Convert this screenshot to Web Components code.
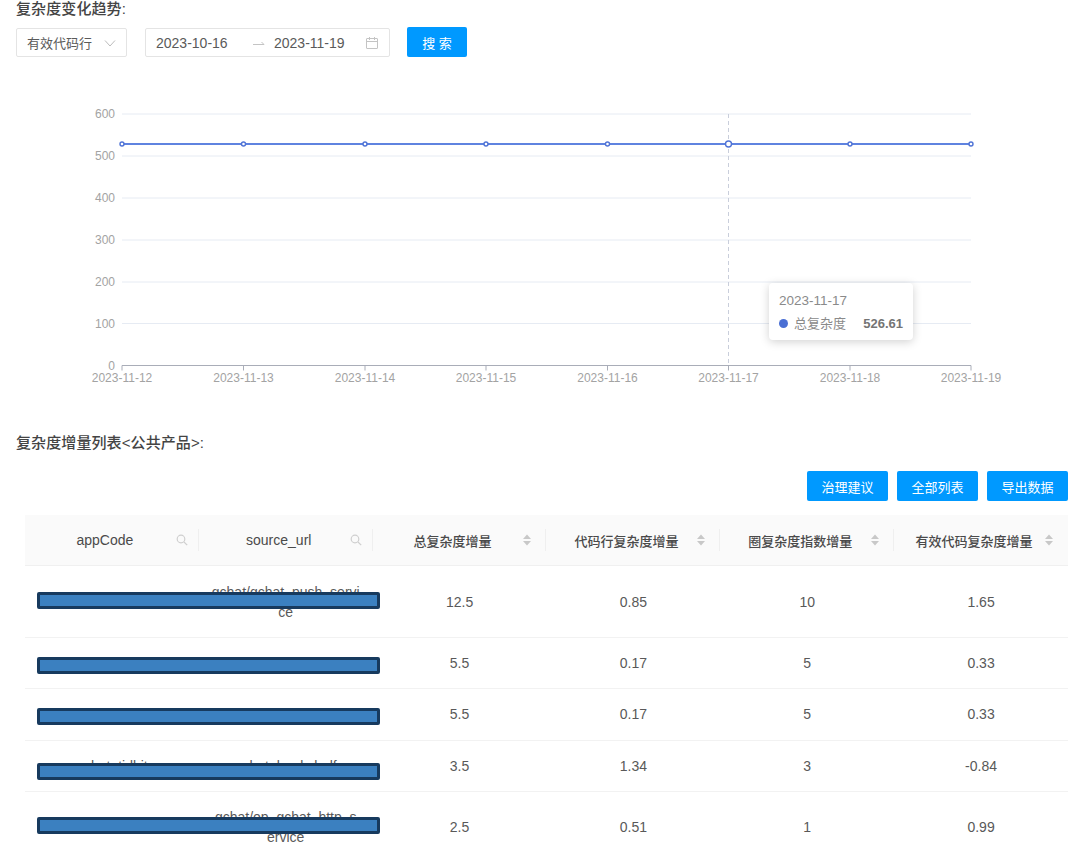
<!DOCTYPE html>
<html lang="zh">
<head>
<meta charset="utf-8">
<title>复杂度</title>
<style>
  html, body { margin: 0; background: #fff; }
  body { height: 847px; overflow: hidden; font: 14px "Liberation Sans", "Noto Sans CJK SC", sans-serif; color: #555; }
</style>
</head>
<body>
<cx-title>复杂度变化趋势:</cx-title>
<cx-filter></cx-filter>
<cx-chart></cx-chart>
<cx-title style="margin-top:44px">复杂度增量列表&lt;公共产品&gt;:</cx-title>
<cx-actions>
  <cx-button>治理建议</cx-button>
  <cx-button>全部列表</cx-button>
  <cx-button>导出数据</cx-button>
</cx-actions>
<cx-table>
  <cx-head></cx-head>
  <cx-row h="72" bar="26" url="gchat/gchat_push_service" vals="12.5,0.85,10,1.65"></cx-row>
  <cx-row h="51.33" bar="19" vals="5.5,0.17,5,0.33"></cx-row>
  <cx-row h="51.33" bar="19" vals="5.5,0.17,5,0.33"></cx-row>
  <cx-row h="51.33" bar="22" app="gchat_tidbit" url="gchat_bookshelf" vals="3.5,1.34,3,-0.84"></cx-row>
  <cx-row h="72" bar="25" url="gchat/op_gchat_http_service" vals="2.5,0.51,1,0.99"></cx-row>
</cx-table>

<script>
  const define = (tag, css, html) => {
    customElements.define(tag, class extends HTMLElement {
      constructor() {
        super();
        this.attachShadow({ mode: "open" });
        const body = typeof html === "function" ? html(this) : html;
        this.shadowRoot.innerHTML = `<style>${css}</style>${body}`;
      }
    });
  };

  define("cx-title", `
    :host { display: block; padding-left: 16px; height: 17px; line-height: 17px; font-size: 15px; font-weight: 500; letter-spacing: .1px; color: #444; }
  `, `<slot></slot>`);

  const chevron = `<svg width="12" height="12" viewBox="0 0 12 12" fill="none" stroke="#bcbcbc"><path d="M1 3.5l5 5.5 5-5.5"/></svg>`;
  const swap = `<svg width="12" height="8" viewBox="0 0 12 8" fill="none" stroke="#c4c4c4"><path d="M0 5.5h11L8.5 3"/></svg>`;
  const calendar = `<svg width="14" height="14" viewBox="0 0 14 14" fill="none" stroke="#c4c4c4"><rect x="1.5" y="2.5" width="11" height="10" rx=".5"/><path d="M1.5 5.5h11M4.5 1v3M9.5 1v3"/></svg>`;

  define("cx-filter", `
    :host { display: flex; align-items: flex-start; margin-top: 10px; padding-left: 16px; height: 30px; color: #5a5a5a; }
    .box { box-sizing: border-box; height: 29px; margin-top: 1px; border: 1px solid #e4e4e4; border-radius: 2px; display: flex; align-items: center; background: #fff; }
    .select { width: 111px; padding: 0 10px; justify-content: space-between; margin-right: 18px; font-size: 13px; }
    .range { width: 245px; padding: 0 10px; }
    .date { width: 97px; }
    .arrow { width: 21px; display: flex; }
    .range > svg { margin-left: auto; }
    .go { margin-left: 17px; width: 60px; height: 30px; background: #0099ff; color: #fff; border-radius: 2px; font-size: 13px; display: flex; align-items: center; justify-content: center; }
  `, `
    <div class="box select"><span>有效代码行</span>${chevron}</div>
    <div class="box range"><span class="date">2023-10-16</span><span class="arrow">${swap}</span><span>2023-11-19</span>${calendar}</div>
    <div class="go">搜 索</div>
  `);

  define("cx-chart", `
    :host { display: block; position: relative; width: 1080px; height: 300px; margin-top: 33px; }
    svg { display: block; }
    text { font: 12px "Liberation Sans", sans-serif; fill: #a3a3a3; }
    .tip { position: absolute; left: 769px; top: 193px; width: 144px; height: 57px; box-sizing: border-box; padding: 9px 10px; background: #fff; border-radius: 4px; box-shadow: 0 2px 10px rgba(0,0,0,.18); color: #8a8a8a; font-size: 13.5px; }
    .day { line-height: 17px; }
    .line { display: flex; align-items: center; margin-top: 6px; line-height: 17px; font-size: 13px; }
    .dot { width: 9px; height: 9px; border-radius: 50%; background: #4a6fd4; margin-right: 6px; }
    .val { margin-left: auto; color: #747474; font-weight: 700; font-size: 13px; }
  `, () => {
    const xs = [122, 243.5, 365, 486, 607.5, 728.5, 850, 971];
    const days = [12, 13, 14, 15, 16, 17, 18, 19];
    const ys = [[600, 24], [500, 66], [400, 108], [300, 150], [200, 192], [100, 233.5], [0, 275.5]];
    const grid = ys.map(([v, y]) => `
      ${v ? `<path d="M122 ${y}H971" stroke="#e6ebf3"/>` : ""}
      <text x="115" y="${y + 4}" text-anchor="end">${v}</text>`).join("");
    const ticks = xs.map((x, i) => `
      <path d="M${x} 275.5v5" stroke="#a9adb8"/>
      <text x="${x}" y="292" text-anchor="middle">2023-11-${days[i]}</text>`).join("");
    const dots = xs.map((x, i) => `<circle cx="${x}" cy="54" r="${i === 5 ? 3 : 2}" fill="#fff" stroke="#4f73d6" stroke-width="1.4"/>`).join("");
    return `
      <svg width="1080" height="300">
        ${grid}
        <path d="M122 275.5H971" stroke="#a9adb8"/>
        ${ticks}
        <path d="M728.5 24V275" stroke="#c9cedb" stroke-dasharray="4 3"/>
        <path d="M122 54H971" stroke="#5f83e0" stroke-width="2"/>
        ${dots}
      </svg>
      <div class="tip">
        <div class="day">2023-11-17</div>
        <div class="line"><span class="dot"></span><span>总复杂度</span><span class="val">526.61</span></div>
      </div>`;
  });

  define("cx-actions", `
    :host { display: flex; justify-content: flex-end; gap: 9px; margin-top: 20px; padding-right: 12px; }
  `, `<slot></slot>`);

  define("cx-button", `
    :host { display: flex; align-items: center; justify-content: center; width: 81px; height: 30px; background: #0099ff; color: #fff; border-radius: 2px; font-size: 13px; }
  `, `<slot></slot>`);

  define("cx-table", `
    :host { display: block; margin: 14px 12px 0 25px; }
  `, `<slot></slot>`);

  const search = `<svg class="ic" width="14" height="14" viewBox="0 0 14 14" fill="none" stroke="#cfcfcf" stroke-width="1.2"><circle cx="6" cy="6" r="3.8"/><path d="M9 9l3.2 3.2"/></svg>`;
  const sorter = `<svg class="ic sort" width="14" height="14" viewBox="0 0 14 14" fill="#c8c8c8"><path d="M7 1.5l4 4.5H3zM7 12.5L3 8h8z"/></svg>`;
  const heads = [["appCode", search], ["source_url", search], ["总复杂度增量", sorter], ["代码行复杂度增量", sorter], ["圈复杂度指数增量", sorter], ["有效代码复杂度增量", sorter]];

  define("cx-head", `
    :host { display: grid; grid-template-columns: repeat(6, 1fr); height: 51px; box-sizing: border-box; background: #fafafa; border-bottom: 1px solid #f0f0f0; color: #4a4a4a; font-weight: 500; font-size: 13px; }
    .th { display: flex; align-items: center; padding-left: 12px; }
    .t { flex: 1; text-align: center; white-space: nowrap; }
    .latin { font-size: 14px; }
    .ic { flex: none; margin-left: 2px; margin-right: 9px; }
    .sort { margin-left: 0; margin-right: 11px; }
    .sep { width: 1px; height: 22px; background: #efefef; flex: none; }
    .th:last-child .sep { background: none; }
  `, () => heads.map(([t, ic]) => `
    <div class="th"><span class="t ${/^[a-z]/i.test(t) ? "latin" : ""}">${t}</span>${ic}<i class="sep"></i></div>`).join(""));

  define("cx-row", `
    :host { display: grid; grid-template-columns: repeat(6, 1fr); position: relative; box-sizing: border-box; border-bottom: 1px solid #f2f2f2; color: #595959; line-height: 20px; }
    .td { display: flex; align-items: center; justify-content: center; text-align: center; padding: 0 12.5px; word-break: break-all; min-width: 0; }
    .bar { position: absolute; left: 12px; width: 343px; height: 17px; box-sizing: border-box; background: #3b80c0; border: 3px solid #173a5e; border-radius: 2px; }
  `, el => {
    el.style.height = `${el.getAttribute("h")}px`;
    const cells = [el.getAttribute("app") || "", el.getAttribute("url") || "", ...el.getAttribute("vals").split(",")];
    return cells.map(c => `<div class="td">${c}</div>`).join("") +
      `<div class="bar" style="top:${el.getAttribute("bar")}px"></div>`;
  });
</script>
</body>
</html>
